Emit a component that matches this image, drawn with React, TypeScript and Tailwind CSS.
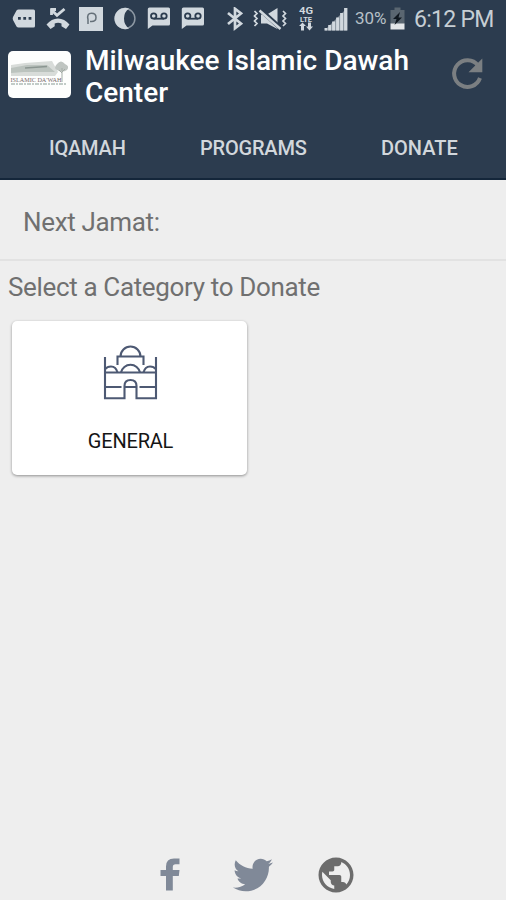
import React from 'react';
import { MdPublic } from 'react-icons/md';
import { FaTwitter } from 'react-icons/fa';

const MessageIcon = () => (
  <svg className="w-6 h-6" viewBox="0 0 24 24" fill="currentColor">
    <path fillRule="evenodd" d="M6.500 2.500H21.500Q23 2.500 23 4V19Q23 20.500 21.500 20.500H6.500Q5.300 20.500 4.500 19.500L1 13Q.4 11.500 1 10L4.500 3.500Q5.300 2.500 6.500 2.500ZM6 10V12.800H8.800V10ZM11.300 10V12.800H14.100V10ZM16.600 10V12.800H19.400V10Z" />
  </svg>
);

const MissedCallIcon = () => (
  <svg className="w-6 h-6" viewBox="0 0 24 24">
    <path d="M5.500 1.500V8M4.500 2.500H10M5.500 3L11 8.300L18.500 2" fill="none" stroke="currentColor" strokeWidth="2.800" />
    <path d="M.5 17.500Q5.500 11.500 12 11.500T23.500 17.500L20 22L15.500 19.200V16.500Q12 15.200 8.700 16.500V19.200L4.500 22Z" fill="currentColor" />
  </svg>
);

const ParkingIcon = () => (
  <svg className="w-6 h-6" viewBox="0 0 24 24">
    <path d="M0 0H24V24H0Z" fill="currentColor" />
    <path d="M9 17V12.500Q7.500 6.300 12.500 6.300Q17 6.300 17 10.500Q17 14.500 12.500 14.500H11" fill="none" stroke="#657079" strokeWidth="1.500" />
  </svg>
);

const EclipseIcon = () => (
  <svg className="w-6 h-6" viewBox="0 0 24 24">
    <circle cx="12" cy="11.500" r="9.900" fill="none" stroke="#8d98a3" strokeWidth="1.500" />
    <path d="M16 1.500A10.700 10.700 0 1 0 16 21.500Q11 18 11 11.500T16 1.500Z" fill="currentColor" />
  </svg>
);

const VoicemailIcon = () => (
  <svg className="w-6 h-6" viewBox="0 0 24 24">
    <path d="M2.500 .5H21.500Q23 .5 23 2V17Q23 18.500 21.500 18.500H5.500L.8 22V2Q.8 .5 2.500 .5Z" fill="currentColor" />
    <g fill="none" stroke="#2c3c4f" strokeWidth="1.800">
      <circle cx="6.700" cy="9" r="2.700" />
      <circle cx="17" cy="9" r="2.700" />
      <path d="M6.700 11.700H17" />
    </g>
  </svg>
);

const BluetoothIcon = () => (
  <svg className="w-4 h-6" viewBox="0 0 16 24" fill="none" stroke="currentColor" strokeWidth="2.700">
    <path d="M1 6L14 16.500L8 21.200V1.800L14 6.500L1 17" />
  </svg>
);

const VibrateMuteIcon = () => (
  <svg className="w-[34px] h-6" viewBox="0 0 34 24">
    <path d="M8 7.500H14L24.500 1V22L14 16.500H8Z" fill="currentColor" />
    <path d="M7 2.500L28 21.500" stroke="#2c3c4f" strokeWidth="4.500" />
    <path d="M6.500 3.500L27.500 22" stroke="currentColor" strokeWidth="2.500" />
    <path d="M1.500 4L4 6.500L1.500 9L4 11.500L1.500 14L4 16.500L1.500 19M30 4L32.500 6.500L30 9L32.500 11.500L30 14L32.500 16.500L30 19" fill="none" stroke="currentColor" strokeWidth="1.700" />
  </svg>
);

const NetworkIcon = () => (
  <svg className="w-4 h-6" viewBox="0 0 16 24" fill="currentColor">
    <text x="1" y="7" textLength="14" lengthAdjust="spacingAndGlyphs" className="text-[9px] font-bold">4G</text>
    <text x="2" y="15" textLength="12" lengthAdjust="spacingAndGlyphs" className="text-[7px] font-bold">LTE</text>
    <path d="M4.500 15.500L8 19H6V23.500H3V19H1ZM10 15.500H13V19.500H15L11.500 23.500L8 19.500H10Z" />
  </svg>
);

const SignalIcon = () => (
  <svg className="w-6 h-6" viewBox="0 0 24 24" fill="currentColor">
    <path d="M.5 23.500L23.300 .8V23.500Z" opacity="0.500" />
    <path d="M.5 21H3.300V23.500H.5ZM4.200 18H7.200V23.500H4.200ZM8.100 14.500H11.200V23.500H8.100ZM12.100 10.500H15.200V23.500H12.100ZM16.100 6H19.200V23.500H16.100ZM20.100 1H23.300V23.500H20.100Z" />
  </svg>
);

const BatteryIcon = () => (
  <svg className="w-[15px] h-6" viewBox="0 0 15 24">
    <path d="M4.500 .5H10.500V3H14.500V17H.5V3H4.500Z" fill="#5a6671" />
    <path d="M.5 16.500H14.500V22.500H.5Z" fill="#e4e7ea" />
    <path d="M10 5L3 12H6.500L4.500 18L12 10.500H8.500Z" fill="#101820" />
  </svg>
);

const RefreshIcon = () => (
  <svg className="w-[46px] h-[46px]" viewBox="0 0 46 46">
    <path d="M34 14.500A13.300 13.300 0 1 0 36 27" fill="none" stroke="currentColor" strokeWidth="4" />
    <path d="M38.300 7.500V21.300H24.500Z" fill="currentColor" />
  </svg>
);

const CenterLogo = () => (
  <svg className="w-[63px] h-[47px] rounded-[5px] bg-[#fdfefd]" viewBox="0 0 63 47">
    <path d="M3 14L17 12L44 10L50 21L47 25H3Z" fill="#d8dcd9" />
    <path d="M3 17L19 14L39 14L47 21H16L3 22Z" fill="#bbc3be" />
    <path d="M17 17L39 15.500" stroke="#8b9691" strokeWidth="1.500" />
    <path d="M49 19Q45 17 49 13Q53 8 57 13Q62 15 59 19Q54 22 49 19Z" fill="#bfc5c1" />
    <path d="M54 17V31M54 22L51 19M54 21L57 18" stroke="#a3aca6" strokeWidth="1" />
    <text x="2.500" y="30.500" textLength="51" lengthAdjust="spacingAndGlyphs" className="font-['Liberation_Serif',serif] text-[7px]" fill="#78686b">ISLAMIC DA'WAH</text>
    <path d="M3 33H58" stroke="#aebcb6" strokeWidth="1.500" strokeDasharray="4 1 2 1" />
  </svg>
);

const MosqueIcon = () => (
  <svg className="w-[56px] h-[56px]" viewBox="0 0 56 56" fill="none" stroke="#4d5973" strokeWidth="2.100">
    <path d="M2 12V53.200H21.500V41Q21.500 35 27.500 35T33.500 41V53.200H53V12" />
    <path d="M2 27.500H53M2 42H18.500M36.500 42H53M21.500 42H33.500" />
    <path d="M14.500 20V11.500H40.500V20M17.500 11.500A10 10 0 0 1 37.500 11.500" />
    <path d="M18 27.500A9.700 9.700 0 0 1 37 27.500M2.500 24Q4 21.500 8 21.500Q13 21.500 14.500 27.500M40.500 27.500Q42 21.500 47 21.500Q51 21.500 52.500 24" />
  </svg>
);

const FacebookIcon = () => (
  <svg className="w-[20px] h-[33px]" viewBox="0 0 20 33" fill="currentColor">
    <path d="M6 32.500V18H.5V12H6V8.500Q6 .5 14 .5H19.500V6.300H15.500Q12.800 6.300 12.800 9V12H19.500L18.800 18H12.800V32.500Z" />
  </svg>
);

const StatusBar: React.FC = () => (
  <div className="flex items-center h-[37px] pl-3 text-[#d1d8de]">
    <MessageIcon />
    <div className="flex ml-[10px]"><MissedCallIcon /></div>
    <div className="flex ml-[9px]"><ParkingIcon /></div>
    <div className="flex ml-[10px]"><EclipseIcon /></div>
    <div className="flex ml-[10px] gap-[10px]">
      <VoicemailIcon />
      <VoicemailIcon />
    </div>
    <div className="flex ml-[22px]"><BluetoothIcon /></div>
    <div className="flex ml-[10px]"><VibrateMuteIcon /></div>
    <div className="flex ml-[11px]"><NetworkIcon /></div>
    <div className="flex ml-[10px]"><SignalIcon /></div>
    <span className="w-[36px] ml-[7px] text-[17px] tracking-[-0.1px] text-[#b7c0c7]">30%</span>
    <div className="flex -ml-px"><BatteryIcon /></div>
    <span className="ml-[9px] pt-[3px] text-[23px] tracking-[-0.7px] whitespace-nowrap text-[#c6ced4]">6:12 PM</span>
  </div>
);

const Header: React.FC = () => (
  <header className="h-[180px] bg-[#2c3c4f] border-b-2 border-[#14263a]">
    <StatusBar />
    <div className="flex h-[78px] pl-2">
      <div className="pt-[14px]"><CenterLogo /></div>
      <h1 className="w-[345px] ml-[14px] pt-[8px] text-[28px] leading-8 font-medium text-white">
        Milwaukee Islamic Dawah Center
      </h1>
      <button className="w-[46px] h-[46px] ml-[14px] mt-[14px] text-[#7b7f82]">
        <RefreshIcon />
      </button>
    </div>
    <nav className="flex pt-[21px] text-[20px] leading-6 font-medium text-[#d2d7dc]">
      <a className="w-[76px] ml-[49px] tracking-[-0.2px]">IQAMAH</a>
      <a className="w-[107px] ml-[75px] tracking-[-0.2px]">PROGRAMS</a>
      <a className="ml-[74px]">DONATE</a>
    </nav>
  </header>
);

const App: React.FC = () => {
  return (
    <div className="flex flex-col w-full h-screen overflow-hidden bg-[#eeeeee] font-['Roboto',sans-serif]">
      <Header />
      <div className="h-[81px] border-b-2 border-[#e2e2e2] pl-[23px] pt-[26px] text-[26px] leading-8 tracking-[-0.35px] text-[#707070]">
        Next Jamat:
      </div>
      <main className="flex-1">
        <h2 className="pl-2 pt-[10px] text-[26px] leading-8 tracking-[-0.35px] text-[#707070]">Select a Category to Donate</h2>
        <button className="flex flex-col items-center w-[235px] h-[154px] mt-[18px] ml-3 pt-[24px] pl-[2px] rounded-[5px] bg-white shadow-[0_1px_3px_rgba(0,0,0,0.4)]">
          <MosqueIcon />
          <span className="mt-[28px] text-[20px] leading-6 tracking-[-0.2px] text-[#151515]">GENERAL</span>
        </button>
      </main>
      <footer className="flex items-center h-[51px] pl-[160px] text-[#808998]">
        <FacebookIcon />
        <FaTwitter className="w-10 h-10 ml-[53px]" />
        <MdPublic className="w-[42px] h-[42px] ml-[42px] text-[#6c6c6c]" />
      </footer>
    </div>
  );
};

export default App;
